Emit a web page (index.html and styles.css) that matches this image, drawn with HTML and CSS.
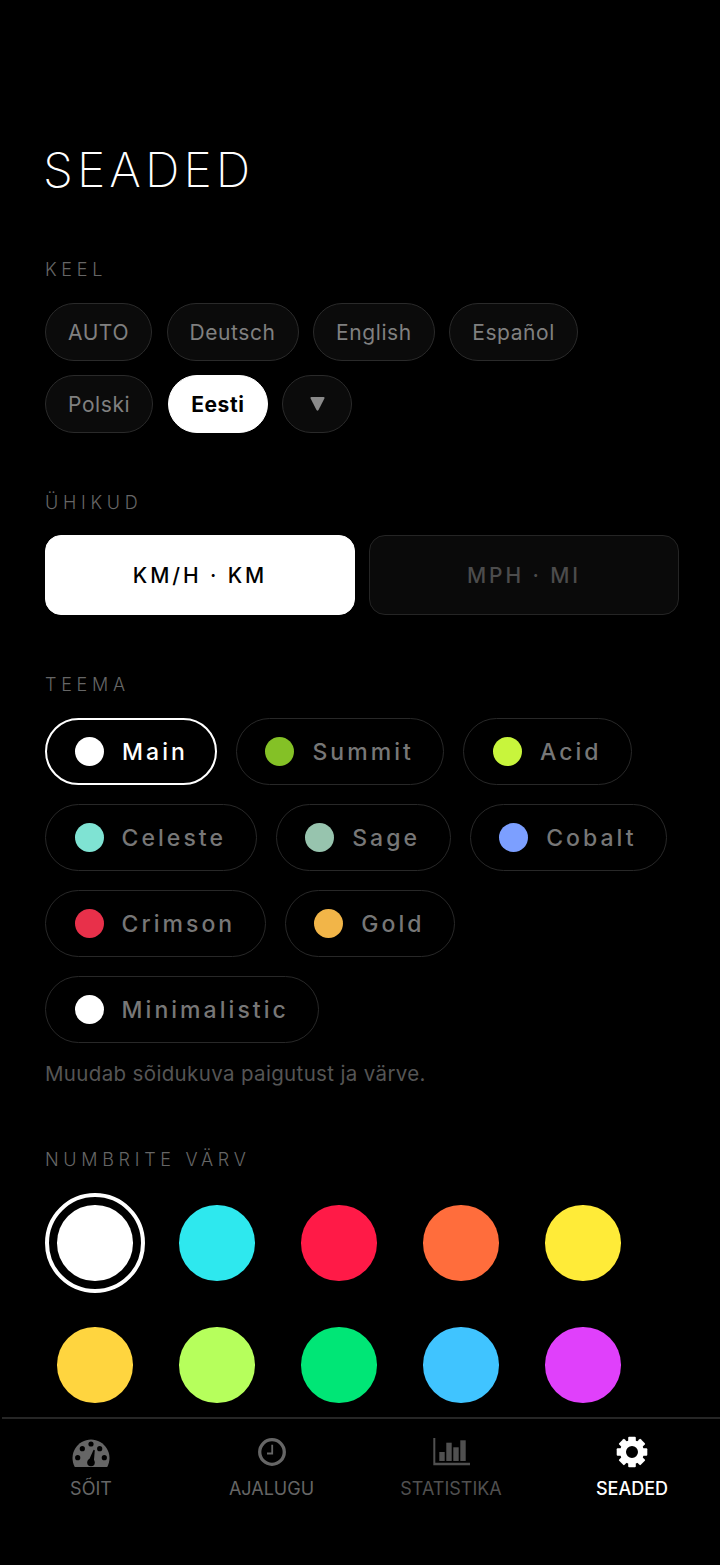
FILE: index.html
```html
<!DOCTYPE html>
<html lang="et">
<head>
<meta charset="utf-8">
<title>Seaded</title>
<link rel="stylesheet" href="styles.css">
</head>
<body>
<main class="page">
  <h1 class="title">SEADED</h1>

  <section class="section sec-lang">
    <h2 class="label">KEEL</h2>
    <div class="chips">
      <button class="chip">AUTO</button>
      <button class="chip">Deutsch</button>
      <button class="chip">English</button>
      <button class="chip">Español</button>
      <button class="chip">Polski</button>
      <button class="chip chip-on">Eesti</button>
      <button class="chip chip-more"><svg class="tri" viewBox="0 0 15 14"><path d="M1.500 0H13.500Q15 0 14.400 1.500L8.500 13Q7.500 14.500 6.500 13L.6 1.500Q0 0 1.500 0Z"/></svg></button>
    </div>
  </section>

  <section class="section sec-units">
    <h2 class="label">ÜHIKUD</h2>
    <div class="units">
      <button class="unit unit-on">KM/H · KM</button>
      <button class="unit">MPH · MI</button>
    </div>
  </section>

  <section class="section sec-theme">
    <h2 class="label">TEEMA</h2>
    <div class="themes">
      <button class="theme theme-on"><span class="dot d-white"></span>Main</button>
      <button class="theme"><span class="dot d-summit"></span>Summit</button>
      <button class="theme"><span class="dot d-acid"></span>Acid</button>
      <button class="theme"><span class="dot d-celeste"></span>Celeste</button>
      <button class="theme"><span class="dot d-sage"></span>Sage</button>
      <button class="theme"><span class="dot d-cobalt"></span>Cobalt</button>
      <button class="theme"><span class="dot d-crimson"></span>Crimson</button>
      <button class="theme"><span class="dot d-gold"></span>Gold</button>
      <button class="theme"><span class="dot d-white"></span>Minimalistic</button>
    </div>
    <p class="hint">Muudab sõidukuva paigutust ja värve.</p>
  </section>

  <section class="section sec-num">
    <h2 class="label">NUMBRITE VÄRV</h2>
    <div class="swatches">
      <span class="swatch swatch-on"><i class="c c1"></i></span>
      <span class="swatch"><i class="c c2"></i></span>
      <span class="swatch"><i class="c c3"></i></span>
      <span class="swatch"><i class="c c4"></i></span>
      <span class="swatch"><i class="c c5"></i></span>
      <span class="swatch"><i class="c c6"></i></span>
      <span class="swatch"><i class="c c7"></i></span>
      <span class="swatch"><i class="c c8"></i></span>
      <span class="swatch"><i class="c c9"></i></span>
      <span class="swatch"><i class="c c10"></i></span>
    </div>
  </section>
</main>

<nav class="tabs">
  <a class="tab">
    <svg class="ico" viewBox="0 0 40 32"><path d="M3.800 31A18.500 18.500 0 1 1 36.200 31Z"/><g class="cut"><circle cx="20" cy="8" r="2.600"/><circle cx="11.300" cy="12.700" r="2.600"/><circle cx="28.700" cy="12.700" r="2.600"/><circle cx="6.700" cy="21.700" r="2.600"/><circle cx="33.300" cy="21.700" r="2.600"/><circle cx="20" cy="26.500" r="3.800"/><path d="M17.500 25L22.600 13.800L23.800 14.200L22.800 26Z"/></g></svg>
    <span>SÕIT</span>
  </a>
  <a class="tab">
    <svg class="ico" viewBox="0 0 40 32"><circle class="ring" cx="20" cy="16" r="12.300"/><path class="hands" d="M20.200 8.700V17.500H15"/></svg>
    <span>AJALUGU</span>
  </a>
  <a class="tab tab-dim">
    <svg class="ico" viewBox="0 0 40 32"><path d="M2.300 2H4.300V26.700H39V29.300H2.300Z"/><rect x="8.300" y="16" width="5.400" height="9"/><rect x="15.300" y="6.700" width="5.400" height="18.300"/><rect x="22.300" y="11.300" width="5.400" height="13.700"/><rect x="29.300" y="4.300" width="5.400" height="20.700"/></svg>
    <span>STATISTIKA</span>
  </a>
  <a class="tab tab-on">
    <svg class="ico" viewBox="0 0 40 32"><g transform="translate(20 16)"><circle class="gear-body" r="9"/><rect x="-3.800" y="-15.300" width="7.600" height="6.300" rx="1"/><rect x="-3.800" y="-15.300" width="7.600" height="6.300" rx="1" transform="rotate(45)"/><rect x="-3.800" y="-15.300" width="7.600" height="6.300" rx="1" transform="rotate(90)"/><rect x="-3.800" y="-15.300" width="7.600" height="6.300" rx="1" transform="rotate(135)"/><rect x="-3.800" y="-15.300" width="7.600" height="6.300" rx="1" transform="rotate(180)"/><rect x="-3.800" y="-15.300" width="7.600" height="6.300" rx="1" transform="rotate(225)"/><rect x="-3.800" y="-15.300" width="7.600" height="6.300" rx="1" transform="rotate(270)"/><rect x="-3.800" y="-15.300" width="7.600" height="6.300" rx="1" transform="rotate(315)"/></g></svg>
    <span>SEADED</span>
  </a>
</nav>
</body>
</html>
```

FILE: styles.css
```css
* { box-sizing: border-box; }
html, body { margin: 0; padding: 0; background: #000; }
body {
  width: 720px;
  height: 1565px;
  display: flex;
  flex-direction: column;
  overflow: hidden;
  font-family: Inter, "Liberation Sans", sans-serif;
  color: #fff;
}
button { font-family: inherit; margin: 0; cursor: pointer; }
.page { flex: 1; min-height: 0; overflow: hidden; padding: 142px 41px 0 45px; }
.title { margin: 0 0 0 -2px; font-size: 48px; line-height: 56px; font-weight: 200; letter-spacing: 4.1px; color: #fff; }
.section { margin: 0; }
.label { margin: 0; font-size: 18px; line-height: 22px; font-weight: 300; letter-spacing: 4.7px; color: #666; }
.sec-lang { margin-top: 61px; }
.sec-units { margin-top: 59px; }
.sec-theme { margin-top: 59px; }
.sec-num { margin-top: 62px; }

.chips { display: flex; flex-wrap: wrap; gap: 14px 14.5px; margin-top: 22px; width: 560px; }
.chip {
  height: 58px; padding: 0 22px; border-radius: 29px;
  background: #0b0b0b; border: 1.5px solid #2a2a2a;
  color: #808080; font-size: 21px; font-weight: 400; letter-spacing: .58px;
}
.chip-on { background: #fff; border-color: #fff; color: #000; font-weight: 700; padding: 0 22.5px; }
.chip-more { width: 70px; padding: 0; display: flex; align-items: center; justify-content: center; }
.tri { width: 15px; height: 14px; fill: #8a8a8a; }

.units { display: flex; gap: 14px; margin-top: 21px; }
.unit {
  flex: 1; height: 80px; border-radius: 16px;
  background: #0a0a0a; border: 1.5px solid #252525;
  color: #4c4c4c; font-size: 21px; font-weight: 500; letter-spacing: 2.9px;
}
.unit-on { background: #fff; border-color: #fff; color: #000; }

.themes { display: flex; flex-wrap: wrap; gap: 19px; margin-top: 22px; width: 630px; }
.theme {
  height: 67px; padding: 0 29.6px 0 28.5px; border-radius: 34px;
  display: flex; align-items: center; gap: 18px;
  background: #000; border: 1.5px solid #282828;
  color: #777; font-size: 23px; font-weight: 500; letter-spacing: 3.05px;
}
.theme-on { border: 2px solid #fff; color: #fff; padding: 0 27px 0 28px; }
.dot { width: 29px; height: 29px; border-radius: 50%; flex: none; }
.d-white { background: #fff; }
.d-summit { background: #84c126; }
.d-acid { background: #c8f53c; }
.d-celeste { background: #7fe3d3; }
.d-sage { background: #97c4ae; }
.d-cobalt { background: #7c9fff; }
.d-crimson { background: #e8304a; }
.d-gold { background: #f2b548; }
.hint { margin: 18px 0 0; font-size: 20.5px; line-height: 26px; font-weight: 400; color: #555; letter-spacing: .35px; }

.swatches { display: grid; grid-template-columns: repeat(5, 100px); gap: 22px; margin-top: 22px; }
.swatch { width: 100px; height: 100px; border-radius: 50%; display: flex; align-items: center; justify-content: center; border: 4px solid transparent; }
.swatch-on { border-color: #fff; }
.c { width: 75.5px; height: 75.5px; border-radius: 50%; display: block; flex: none; }
.c1 { background: #fff; }
.c2 { background: #2ee8ee; }
.c3 { background: #ff1a47; }
.c4 { background: #ff6d3c; }
.c5 { background: #ffeb38; }
.c6 { background: #ffd53f; }
.c7 { background: #b6ff5c; }
.c8 { background: #00e676; }
.c9 { background: #40c4ff; }
.c10 { background: #e040fb; }

.tabs {
  flex: none; height: 148px; margin-left: 2px;
  border-top: 2px solid #262626; background: #000;
  display: grid; grid-template-columns: 178px 183px 176px 181px;
  padding-top: 17px;
}
.tab { display: flex; flex-direction: column; align-items: center; color: #666; font-size: 18px; line-height: 22px; }
.tab span { margin-top: 10px; }
.tab-dim { color: #505050; }
.tab-on { color: #fff; padding-left: 5px; font-weight: 500; }
.ico { width: 40px; height: 32px; fill: currentColor; display: block; flex: none; }
.cut { fill: #000; }
.ring { fill: none; stroke: currentColor; stroke-width: 3.300; }
.hands { fill: none; stroke: currentColor; stroke-width: 1.800; }
.gear-body { fill: none; stroke: currentColor; stroke-width: 6; }
```
